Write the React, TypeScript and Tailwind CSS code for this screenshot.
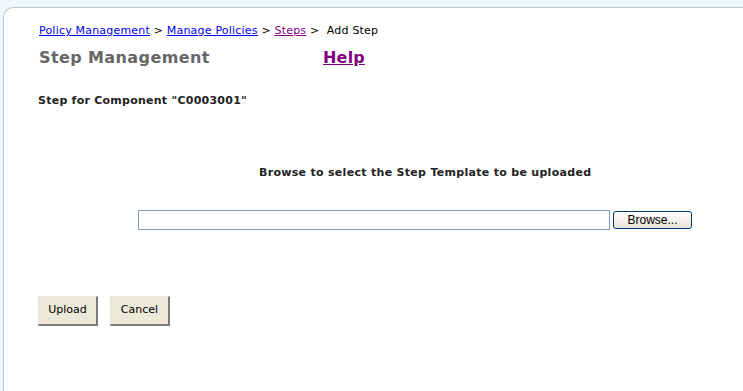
export default function App() {
  return (
    <div className="h-[391px] w-[743px] overflow-hidden bg-[#eef8ff] pl-[3px] pt-[7px] font-['DejaVu_Sans',Verdana,sans-serif]">
      <div className="h-full rounded-tl-[10px] border-l border-t border-[#c4c4c4] bg-white">
        <nav className="pl-[35px] pt-[16px] text-[11px] leading-[14px] tracking-[0.2px] text-black">
          <a href="#" className="text-[#0000ee] underline">Policy Management</a>
          <span> &gt; </span>
          <a href="#" className="text-[#0000ee] underline">Manage Policies</a>
          <span> &gt; </span>
          <a href="#" className="text-[#800080] underline">Steps</a>
          <span> &gt;&nbsp; Add Step</span>
        </nav>

        <div className="mt-[10px] flex items-center pl-[35px]">
          <h1 className="w-[284px] text-[16px] font-bold leading-[20px] tracking-[0.4px] text-[#666666]">Step Management</h1>
          <a href="#" className="text-[16px] font-bold leading-[20px] tracking-[0.2px] text-[#800080] underline">Help</a>
        </div>

        <p className="mt-[26px] pl-[34px] text-[11px] font-bold leading-[14px] tracking-[0.25px] text-[#222]">
          Step for Component "C0003001"
        </p>

        <p className="mt-[58px] pl-[255px] text-[11px] font-bold leading-[14px] tracking-[0.3px] text-[#222]">
          Browse to select the Step Template to be uploaded
        </p>

        <div className="mt-[30px] flex items-center gap-[3px] pl-[134px]">
          <input
            type="text"
            className="h-[20px] w-[472px] border border-[#7f9db9] bg-white outline-none"
          />
          <button className="h-[18px] w-[79px] rounded-[3px] border border-[#003c74] bg-gradient-to-b from-white to-[#e6e3d6] font-['Liberation_Sans',Arial,sans-serif] text-[12px] leading-[14px] text-black">
            Browse...
          </button>
        </div>

        <div className="mt-[66px] flex gap-[12px] pl-[34px]">
          <button className="h-[30px] w-[60px] border border-b-2 border-r-2 border-b-[#7a7a7a] border-l-[#e8e6dc] border-r-[#7a7a7a] border-t-[#e8e6dc] bg-[#ece9d8] text-[11px] text-black">
            Upload
          </button>
          <button className="h-[30px] w-[60px] border border-b-2 border-r-2 border-b-[#7a7a7a] border-l-[#e8e6dc] border-r-[#7a7a7a] border-t-[#e8e6dc] bg-[#ece9d8] text-[11px] text-black">
            Cancel
          </button>
        </div>
      </div>
    </div>
  );
}
